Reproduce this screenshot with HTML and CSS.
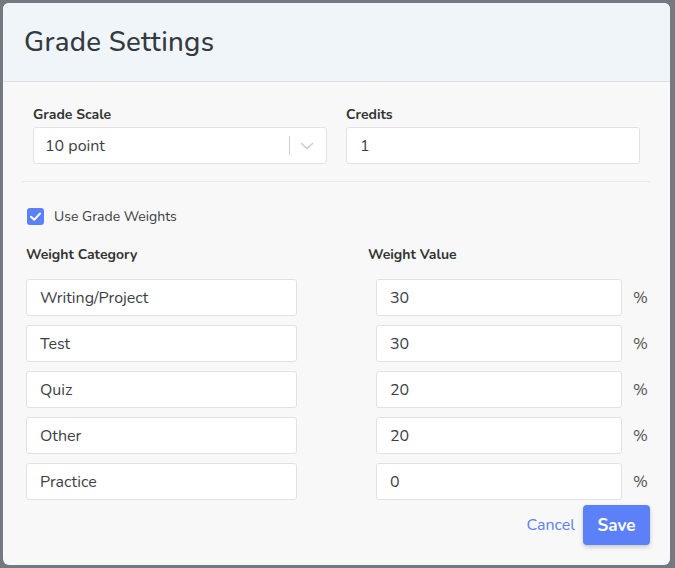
FILE: index.html
```html
<!DOCTYPE html>
<html>
<head>
<meta charset="utf-8">
<link rel="stylesheet" href="styles.css">
</head>
<body>
<div class="modal">
  <div class="modal-header">
    <h1 class="title">Grade Settings</h1>
  </div>
  <div class="modal-body">
    <div class="top-row">
      <div class="field">
        <label class="label">Grade Scale</label>
        <div class="select">
          <span class="select-value">10 point</span>
          <span class="select-sep"></span>
          <svg class="chev" width="20" height="20" viewBox="0 0 20 20"><path d="M4.5 7.5 L10 12.5 L15.5 7.5" fill="none" stroke="#cccccc" stroke-width="1.6" stroke-linecap="round" stroke-linejoin="round"/></svg>
        </div>
      </div>
      <div class="field">
        <label class="label">Credits</label>
        <div class="input">1</div>
      </div>
    </div>
    <div class="divider"></div>
    <div class="check-row">
      <span class="checkbox"><svg width="17" height="17" viewBox="0 0 17 17"><path d="M4 8.8 L7.2 11.8 L13 5.6" fill="none" stroke="#fff" stroke-width="2" stroke-linecap="round" stroke-linejoin="round"/></svg></span>
      <span class="check-label">Use Grade Weights</span>
    </div>
    <div class="weights">
      <div class="wh label">Weight Category</div>
      <div class="wh label">Weight Value</div>
      <div></div>
      <div class="input">Writing/Project</div><div class="input">30</div><div class="pct">%</div>
      <div class="input">Test</div><div class="input">30</div><div class="pct">%</div>
      <div class="input">Quiz</div><div class="input">20</div><div class="pct">%</div>
      <div class="input">Other</div><div class="input">20</div><div class="pct">%</div>
      <div class="input">Practice</div><div class="input">0</div><div class="pct">%</div>
    </div>
    <div class="footer">
      <span class="cancel">Cancel</span>
      <button class="save">Save</button>
    </div>
  </div>
</div>
</body>
</html>
```
FILE: styles.css
```css
html, body { margin: 0; padding: 0; }
body {
  background: #74787f;
  font-family: "Nunito", "Lato", "Noto Sans", sans-serif;
  color: #3c3f46;
  width: 675px;
  height: 568px;
  overflow: hidden;
}
.modal {
  margin: 3px 0 0 3px;
  width: 667px;
  height: 562px;
  border-radius: 6px;
  background: #f8f8f8;
  overflow: hidden;
  display: flex;
  flex-direction: column;
}
.modal-header {
  height: 79px;
  background: #f0f5fa;
  border-bottom: 1px solid #dcdfe3;
  display: flex;
  align-items: center;
  padding-left: 21px;
  box-sizing: border-box;
  flex: none;
}
.title {
  margin: 0;
  font-size: 27.6px;
  font-weight: 500;
  color: #343a40;
  letter-spacing: 0.3px;
  padding-bottom: 1px;
}
.modal-body {
  flex: 1;
  display: flex;
  flex-direction: column;
}
.top-row {
  display: grid;
  grid-template-columns: 294px 294px;
  column-gap: 19px;
  padding: 25px 30px 0 30px;
}
.field { display: flex; flex-direction: column; }
.label {
  font-size: 14px;
  font-weight: 700;
  color: #333;
  line-height: 16px;
  margin-bottom: 4px;
}
.select, .input {
  height: 37px;
  box-sizing: border-box;
  background: #fff;
  border: 1px solid #e0e2e5;
  border-radius: 3px;
  display: flex;
  align-items: center;
  font-size: 16px;
  color: #3c3f46;
  padding-left: 13px;
}
.select { padding-left: 11px; }
.select-value { flex: 1; }
.select-sep {
  width: 1px;
  height: 19px;
  background: #cfcfcf;
  margin-right: 7px;
}
.chev { margin-right: 9px; }
.divider {
  margin: 17px 20px 0 19px;
  height: 1px;
  background: #eaeaea;
}
.check-row {
  display: flex;
  align-items: center;
  padding-left: 24px;
  margin-top: 25px;
}
.checkbox {
  width: 17px;
  height: 17px;
  border-radius: 3px;
  background: #5b80f7;
  display: flex;
}
.check-label {
  font-size: 14px;
  margin-left: 10px;
  color: #3a3d44;
}
.weights {
  display: grid;
  grid-template-columns: 271px 325px auto;
  row-gap: 9px;
  padding-left: 23px;
  margin-top: 21px;
}
.weights > .input:nth-child(3n+2) { margin-left: 79px; }
.weights .wh.label { margin-bottom: 7px; }
.weights .wh:nth-child(2) { margin-left: 71px; }
.pct {
  font-size: 16px;
  color: #555;
  display: flex;
  align-items: center;
  padding-left: 11px;
}
.footer {
  display: flex;
  justify-content: flex-end;
  align-items: center;
  padding-right: 20px;
  margin-top: 5px;
}
.cancel {
  color: #5b80f7;
  font-size: 16px;
  margin-right: 8px;
}
.save {
  width: 67px;
  height: 40px;
  border: none;
  border-radius: 4px;
  background: #5b80f7;
  color: #fff;
  font-family: inherit;
  font-size: 17px;
  font-weight: 700;
  box-shadow: 0 2px 4px rgba(0,0,0,0.2);
}
```
